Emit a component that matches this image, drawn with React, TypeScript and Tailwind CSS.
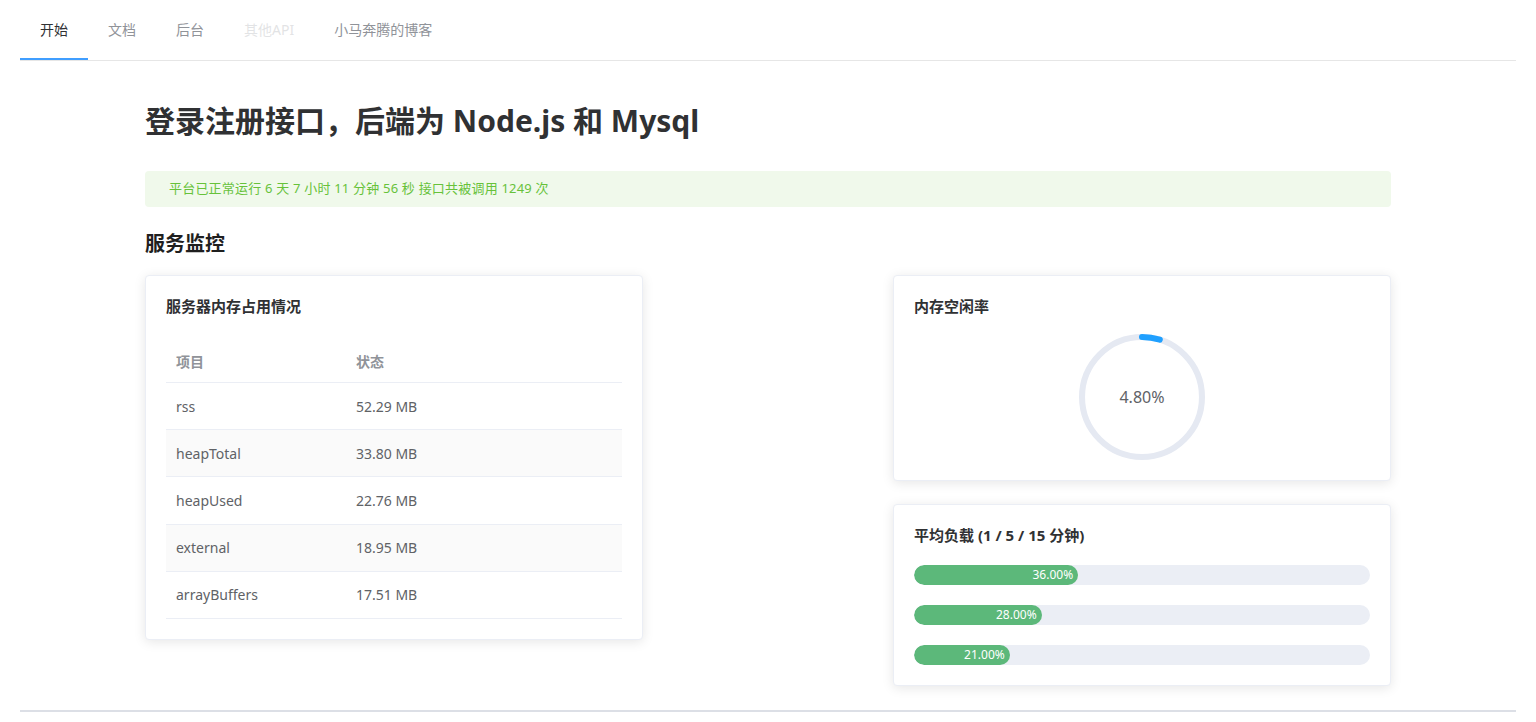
import React from "react";

const font = {
  fontFamily: '"Noto Sans", "Noto Sans CJK SC", sans-serif',
};

const tabs = [
  { label: "开始", active: true },
  { label: "文档" },
  { label: "后台" },
  { label: "其他API", disabled: true },
  { label: "小马奔腾的博客" },
];

const memory = [
  { key: "rss", value: "52.29 MB" },
  { key: "heapTotal", value: "33.80 MB" },
  { key: "heapUsed", value: "22.76 MB" },
  { key: "external", value: "18.95 MB" },
  { key: "arrayBuffers", value: "17.51 MB" },
];

const loads = [36, 28, 21];

function Card({ title, children }: { title: string; children: React.ReactNode }) {
  return (
    <div className="w-[498px] rounded-[4px] border border-[#ebeef5] bg-white p-5 shadow-[0_2px_12px_0_rgba(0,0,0,0.1)]">
      <h3 className="text-[15px] leading-[20px] font-bold text-[#303133]">{title}</h3>
      {children}
    </div>
  );
}

function Ring({ percent }: { percent: number }) {
  const r = 47.6;
  const len = 2 * Math.PI * r;
  return (
    <div className="relative h-[126px] w-[126px]">
      <svg viewBox="0 0 100 100" className="h-full w-full -rotate-90">
        <circle cx="50" cy="50" r={r} fill="none" stroke="#e5e9f2" strokeWidth="4.8" />
        <circle
          cx="50"
          cy="50"
          r={r}
          fill="none"
          stroke="#20a0ff"
          strokeWidth="4.8"
          strokeLinecap="round"
          strokeDasharray={`${(len * percent) / 100} ${len}`}
        />
      </svg>
      <div className="absolute inset-0 flex items-center justify-center text-[16px] text-[#606266]">
        {percent.toFixed(2)}%
      </div>
    </div>
  );
}

export default function App() {
  return (
    <div className="min-h-screen bg-white" style={font}>
      {/* top menu */}
      <div className="mx-5 flex h-[61px] border-b border-[#e6e6e6]">
        {tabs.map((t) => (
          <div
            key={t.label}
            className={
              "flex h-[60px] items-center border-b-2 px-5 text-[14px] " +
              (t.active
                ? "border-[#409eff] text-[#303133]"
                : t.disabled
                  ? "border-transparent text-[#909399] opacity-25"
                  : "border-transparent text-[#909399]")
            }
          >
            {t.label}
          </div>
        ))}
      </div>

      <div className="px-[145px]">
        <h1 className="mt-[40px] text-[30px] leading-[40px] font-bold text-[#303133]">
          登录注册接口，后端为 Node.js 和 Mysql
        </h1>

        <div className="mt-[30px] flex h-9 items-center rounded-[4px] bg-[#f0f9eb] px-6 text-[13px] tracking-[0.2px] text-[#67c23a]">
          平台已正常运行 6 天 7 小时 11 分钟 56 秒 接口共被调用 1249 次
        </div>

        <h2 className="mt-[23px] text-[20px] leading-[28px] font-bold text-[#1f1f1f]">服务监控</h2>

        <div className="mt-[17px] flex items-start justify-between">
          <Card title="服务器内存占用情况">
            <div className="mt-[24px] text-[14px]">
              <div className="flex h-[43px] items-center border-b border-[#ebeef5] font-bold text-[#909399]">
                <div className="w-[180px] pl-[10px]">项目</div>
                <div className="pl-[10px]">状态</div>
              </div>
              {memory.map((m, i) => (
                <div
                  key={m.key}
                  className={
                    "flex h-[47.2px] items-center border-b border-[#ebeef5] text-[#606266] " +
                    (i % 2 === 1 ? "bg-[#fafafa]" : "")
                  }
                >
                  <div className="w-[180px] pl-[10px]">{m.key}</div>
                  <div className="pl-[10px]">{m.value}</div>
                </div>
              ))}
            </div>
          </Card>

          <div className="flex flex-col gap-[23px]">
            <Card title="内存空闲率">
              <div className="mt-[18px] flex justify-center">
                <Ring percent={4.8} />
              </div>
            </Card>
            <Card title="平均负载 (1 / 5 / 15 分钟)">
              <div className="mt-5 flex flex-col gap-5">
                {loads.map((v) => (
                  <div key={v} className="h-5 w-full overflow-hidden rounded-full bg-[#ebeef5]">
                    <div
                      className="flex h-full items-center justify-end rounded-full bg-[#5cb87a] pr-[5px] text-[12px] text-white"
                      style={{ width: `${v}%` }}
                    >
                      {v.toFixed(2)}%
                    </div>
                  </div>
                ))}
              </div>
            </Card>
          </div>
        </div>
      </div>

      <div className="mx-5 mt-[24px] border-t-2 border-[#dcdfe6]" />
    </div>
  );
}
